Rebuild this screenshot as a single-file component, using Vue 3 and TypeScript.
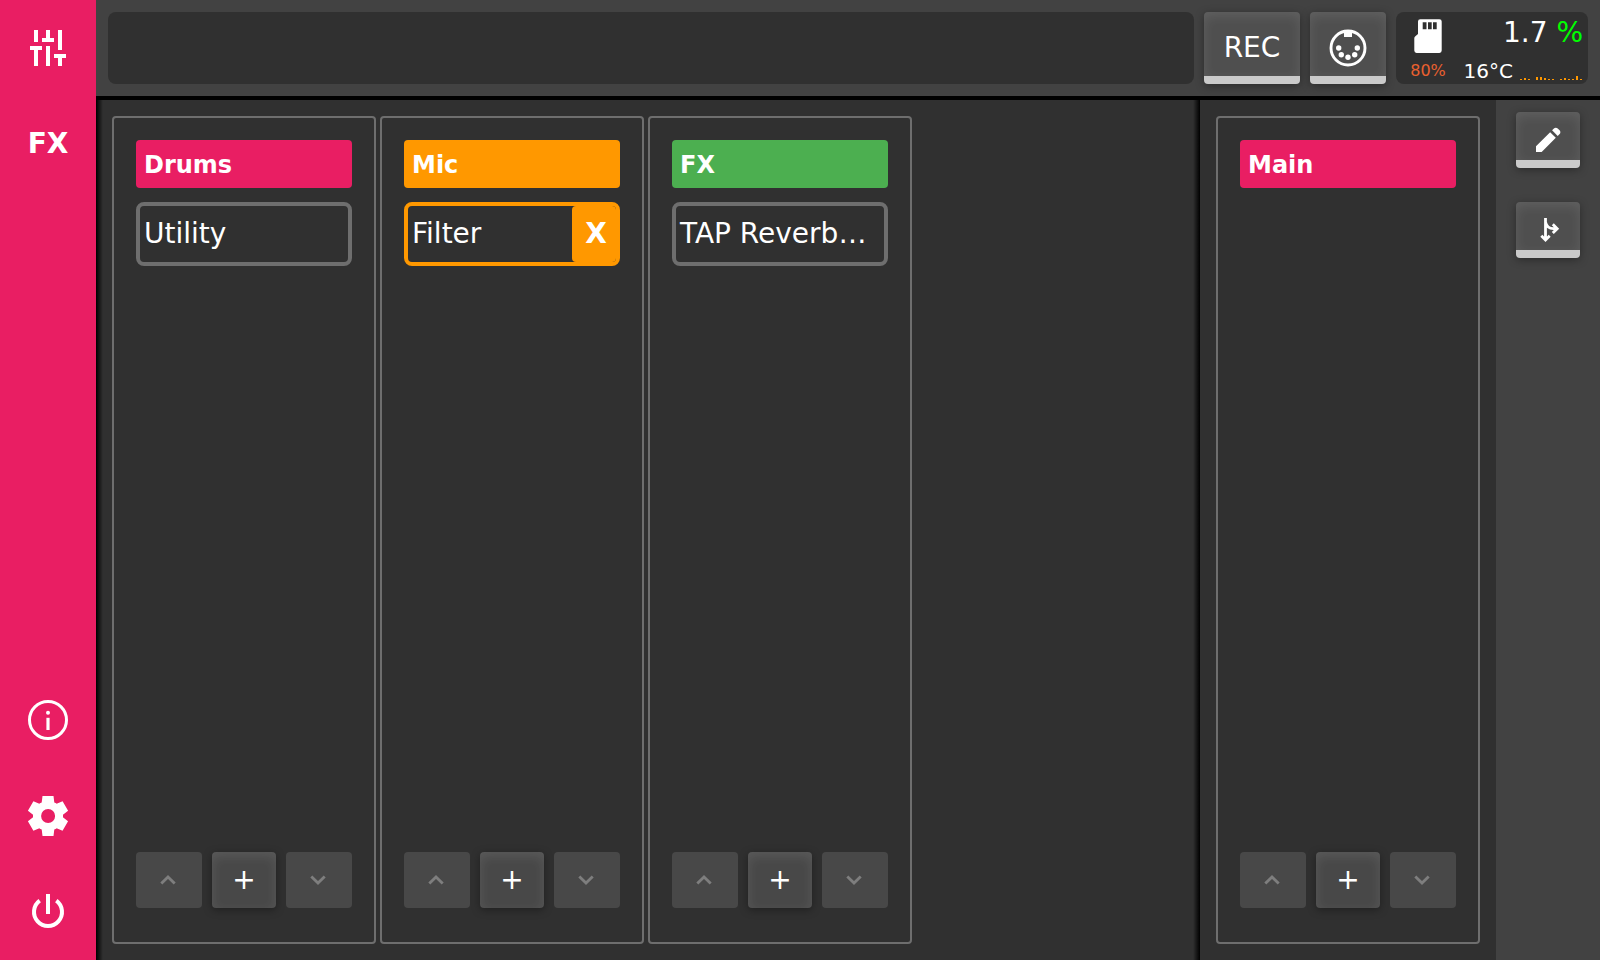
<script setup lang="ts">
interface Channel {
  name: string
  color: string
  plugin?: string
  selected?: boolean
}

const tracks: Channel[] = [
  { name: 'Drums', color: '#e91e63', plugin: 'Utility' },
  { name: 'Mic', color: '#ff9800', plugin: 'Filter', selected: true },
  { name: 'FX', color: '#4caf50', plugin: 'TAP Reverb…' },
]
const master: Channel[] = [{ name: 'Main', color: '#e91e63' }]
const groups = [
  { id: 'tracks', channels: tracks },
  { id: 'master', channels: master },
]
const load: number[] = [1, 2, 1, 0, 3, 3, 2, 1, 1, 0, 1, 2, 1, 1, 4, 1]
</script>

<template>
  <div class="app">
    <nav class="sidebar">
      <button class="nav" aria-label="Mixer">
        <svg viewBox="0 0 24 24" class="icon48">
          <path d="M5 3h2v6H5zM3 11h6v2H7v8H5v-8H3zM11 3h2v4h2v2H9V7h2zM11 11h2v10h-2zM17 3h2v10h-2zM15 15h6v2h-2v4h-2v-4h-2z" />
        </svg>
      </button>
      <button class="nav text">FX</button>
      <span class="grow"></span>
      <button class="nav" aria-label="Info">
        <svg viewBox="0 0 48 48" class="icon48">
          <circle cx="24" cy="24" r="18.5" fill="none" stroke="currentColor" stroke-width="3" />
          <circle cx="24" cy="16.8" r="2" />
          <path d="M22.4 21.8h3.2V34h-3.2z" />
        </svg>
      </button>
      <button class="nav" aria-label="Settings">
        <svg viewBox="0 0 24 24" class="icon48">
          <path d="m9.25 22-.4-3.2q-.325-.125-.612-.3t-.563-.375L4.7 19.375l-2.75-4.75 2.575-1.95Q4.5 12.5 4.5 12.337v-.675q0-.162.025-.337L1.95 9.375l2.75-4.75 2.975 1.25q.275-.2.575-.375t.6-.3l.4-3.2h5.5l.4 3.2q.325.125.613.3t.562.375l2.975-1.25 2.75 4.75-2.575 1.95q.025.175.025.338v.674q0 .163-.05.338l2.575 1.95-2.75 4.75-2.95-1.25q-.275.2-.575.375t-.6.3l-.4 3.2zm2.8-6.5q1.45 0 2.475-1.025T15.55 12t-1.025-2.475T12.05 8.5q-1.475 0-2.488 1.025T8.55 12t1.013 2.475T12.05 15.5" />
        </svg>
      </button>
      <button class="nav" aria-label="Power">
        <svg viewBox="0 0 48 48" class="icon48">
          <path d="M32.3 12.7A14 14 0 1 1 15.7 12.7M24 6v20" fill="none" stroke="currentColor" stroke-width="4" />
        </svg>
      </button>
    </nav>

    <div class="body">
      <header class="topbar">
        <div class="display"></div>
        <button class="key lit rec">REC</button>
        <button class="key lit midi" aria-label="MIDI">
          <svg viewBox="0 0 40 40" class="icon40">
            <circle cx="20" cy="20" r="17" fill="none" stroke="currentColor" stroke-width="2.9" />
            <path d="M16 2.5h8v6.5h-8z" />
            <circle cx="10.7" cy="20" r="2.7" />
            <circle cx="29.3" cy="20" r="2.7" />
            <circle cx="13.3" cy="26.7" r="2.7" />
            <circle cx="26.7" cy="26.7" r="2.7" />
            <circle cx="20" cy="29.3" r="2.7" />
          </svg>
        </button>
        <div class="status">
          <div class="disk">
            <svg viewBox="0 0 40 40" class="icon40">
              <path fill-rule="evenodd" d="M12.3 3.3H31.4a2.3 2.3 0 0 1 2.3 2.3V34.6a2.3 2.3 0 0 1-2.3 2.3H8.6a2.3 2.3 0 0 1-2.3-2.3V22.4q0-1 .8-1.8L10 18V5.6a2.3 2.3 0 0 1 2.3-2.3zM14.7 6.3v7h3.8v-7zM20 6.3v7h3.7v-7zM25 6.3v7h3.7v-7z" />
            </svg>
            <span class="used">80%</span>
          </div>
          <div class="meters">
            <div class="cpu">1.7 <span class="ok">%</span></div>
            <div class="temp">
              <span>16°C</span>
              <svg viewBox="0 0 64 16" class="graph">
                <rect v-for="(v, i) in load" :key="i" :x="i * 4" :y="16 - v" width="2" :height="v" />
              </svg>
            </div>
          </div>
        </div>
      </header>

      <div class="content">
        <main class="board">
          <section v-for="g in groups" :key="g.id" class="group" :class="g.id">
            <article v-for="c in g.channels" :key="c.name" class="channel">
              <h2 class="title" :style="{ background: c.color }">{{ c.name }}</h2>
              <div v-if="c.plugin" class="slot" :style="c.selected ? { borderColor: c.color } : undefined">
                <button class="plugin">{{ c.plugin }}</button>
                <button v-if="c.selected" class="remove" :style="{ background: c.color }">X</button>
              </div>
              <footer class="actions">
                <button class="move" disabled aria-label="Move up">
                  <svg viewBox="0 0 24 24" class="icon24"><path d="M5.3 15.6 12 8.9l6.7 6.7" class="chev" /></svg>
                </button>
                <button class="key add">+</button>
                <button class="move" disabled aria-label="Move down">
                  <svg viewBox="0 0 24 24" class="icon24"><path d="M5.3 8.4 12 15.1l6.7-6.7" class="chev" /></svg>
                </button>
              </footer>
            </article>
          </section>
        </main>
        <aside class="tools">
          <button class="key lit tool" aria-label="Edit">
            <svg viewBox="0 0 24 24" class="icon32">
              <path d="m19.3 8.925-4.25-4.2 1.4-1.4q.575-.575 1.413-.575t1.412.575l1.4 1.4q.575.575.6 1.388t-.55 1.387zM17.85 10.4 7.25 21H3v-4.25l10.6-10.6z" />
            </svg>
          </button>
          <button class="key lit tool" aria-label="Routing">
            <svg viewBox="0 0 32 32" class="icon32">
              <path d="M13.5 4v22M9.3 21.8l4.2 4.2 4.2-4.2M13.5 8q1.5 6.7 8 6.7h3.4M20.8 10.3l4.4 4.4-4.4 4.4" fill="none" stroke="currentColor" stroke-width="2.8" />
            </svg>
          </button>
        </aside>
      </div>
    </div>
  </div>
</template>

<style>
body {
  background: #303030;
}
</style>

<style scoped>
.app {
  display: flex;
  min-height: 100vh;
  color: #fff;
  font-family: 'DejaVu Sans', sans-serif;
  font-size: 28px;
}
.app * {
  box-sizing: border-box;
}
button {
  margin: 0;
  padding: 0;
  border: 0;
  background: none;
  color: inherit;
  font: inherit;
}
svg {
  display: block;
  flex: none;
  fill: currentColor;
}
.icon48 {
  width: 48px;
  height: 48px;
}
.icon40 {
  width: 40px;
  height: 40px;
}
.icon32 {
  width: 32px;
  height: 32px;
}
.icon24 {
  width: 24px;
  height: 24px;
}
.sidebar {
  display: flex;
  flex-direction: column;
  flex: none;
  width: 96px;
  background: #e91e63;
}
.nav {
  display: flex;
  align-items: center;
  justify-content: center;
  height: 96px;
  font-weight: bold;
}
.text {
  padding-bottom: 2px;
}
.grow {
  flex: 1;
}
.body {
  display: flex;
  flex-direction: column;
  flex: 1;
  min-width: 0;
}
.topbar {
  display: flex;
  gap: 10px;
  height: 100px;
  padding: 12px;
  border-bottom: 4px solid #000;
  background: #424242;
}
.display {
  flex: 1;
  border-radius: 8px;
  background: #303030;
}
.key {
  display: flex;
  align-items: center;
  justify-content: center;
  border-radius: 4px;
  background: #484848;
  box-shadow: 0 2px 8px rgba(0, 0, 0, 0.35), inset 0 4px 12px rgba(255, 255, 255, 0.1);
}
.lit {
  border-bottom: 8px solid #cacaca;
  background: #4f4f4f;
}
.rec {
  width: 96px;
  padding-top: 6px;
}
.midi {
  width: 76px;
  padding-top: 8px;
}
.status {
  display: flex;
  width: 192px;
  border-radius: 8px;
  background: #303030;
}
.disk {
  display: flex;
  flex-direction: column;
  align-items: center;
  width: 64px;
  padding-top: 4px;
}
.used {
  color: #e9602f;
  font-size: 16px;
  line-height: 30px;
}
.meters {
  display: flex;
  flex-direction: column;
  flex: 1;
  padding: 4px 4px 4px 0;
}
.cpu {
  padding-right: 1px;
  line-height: 34px;
  text-align: right;
}
.ok {
  color: #0f0;
}
.temp {
  display: flex;
  align-items: flex-end;
  justify-content: flex-end;
  gap: 7px;
  flex: 1;
  font-size: 20px;
  line-height: 18px;
}
.graph {
  width: 64px;
  height: 16px;
  fill: #ff9800;
}
.content {
  display: flex;
  flex: 1;
}
.board {
  display: flex;
  flex: 1;
  min-width: 0;
}
.group {
  display: flex;
  gap: 4px;
  padding: 16px;
  background: #303030;
}
.tracks {
  flex: 1;
  background: linear-gradient(to right, #000, transparent 7px),
    linear-gradient(to left, #000, transparent 7px), #303030;
}
.channel {
  display: flex;
  flex-direction: column;
  gap: 14px;
  width: 264px;
  padding: 22px 22px 34px;
  border: 2px solid #6e6e6e;
  border-radius: 4px;
}
.title {
  height: 48px;
  margin: 0;
  padding: 0 8px;
  border-radius: 4px;
  font-size: 24px;
  line-height: 50px;
}
.slot {
  display: flex;
  height: 64px;
  border: 4px solid #6e6e6e;
  border-radius: 8px;
}
.plugin {
  flex: 1;
  padding: 0 4px 2px;
  overflow: hidden;
  text-align: left;
  white-space: nowrap;
}
.remove {
  width: 44px;
  padding: 0 0 2px 4px;
  border-radius: 4px;
  font-weight: bold;
}
.actions {
  display: flex;
  gap: 10px;
  height: 56px;
  margin-top: auto;
}
.move {
  display: flex;
  align-items: center;
  justify-content: center;
  flex: 1;
  padding-right: 2px;
  border-radius: 4px;
  background: #484848;
  color: #7e7e7e;
}
.chev {
  fill: none;
  stroke: currentColor;
  stroke-width: 2.8;
}
.add {
  width: 64px;
  padding-bottom: 2px;
}
.tools {
  display: flex;
  flex-direction: column;
  align-items: center;
  gap: 34px;
  width: 104px;
  padding-top: 12px;
  background: #424242;
}
.tool {
  width: 64px;
  height: 56px;
  padding-top: 8px;
}
</style>
